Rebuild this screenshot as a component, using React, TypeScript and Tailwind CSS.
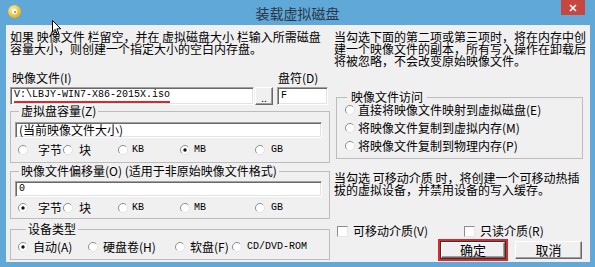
import React from "react";

const cjk = "font-['Noto_Sans_CJK_SC','Liberation_Sans',sans-serif]";
const mono = "font-['Liberation_Mono',monospace]";

function RadioDot({ checked }: { checked?: boolean }) {
  return (
    <svg width="10" height="10" viewBox="0 0 10 10" className="shrink-0">
      <circle cx="5" cy="5" r="4.5" fill="#fff" />
      <path d="M1.8 8.2 A4.5 4.5 0 0 1 8.2 1.8" stroke="#8c8c8c" strokeWidth="1" fill="none" />
      <path d="M8.2 1.8 A4.5 4.5 0 0 1 1.8 8.2" stroke="#e2e2e2" strokeWidth="1" fill="none" />
      {checked && <circle cx="5" cy="5" r="1.7" fill="#111" />}
    </svg>
  );
}

function Radio({
  label,
  checked,
  w,
  gap,
  latin,
}: {
  label: string;
  checked?: boolean;
  w?: string;
  gap: string;
  latin?: boolean;
}) {
  return (
    <div className={`flex items-center h-[12px] shrink-0 ${w ?? ""}`}>
      <RadioDot checked={checked} />
      <span className={`${gap} whitespace-nowrap ${latin ? `${mono} text-[10px]` : ""}`}>{label}</span>
    </div>
  );
}

function Checkbox({ label, w }: { label: string; w?: string }) {
  return (
    <div className={`flex items-center h-[12px] ${w ?? ""}`}>
      <div className="w-[11px] h-[11px] bg-white border border-t-[#8c8c8c] border-l-[#8c8c8c] border-b-[#e6e6e6] border-r-[#e6e6e6]" />
      <span className="ml-[5px] whitespace-nowrap">{label}</span>
    </div>
  );
}

const sunken =
  "bg-white border border-t-[#a0a0a0] border-l-[#a0a0a0] border-b-white border-r-white shadow-[inset_1px_1px_0_#696969,inset_-1px_-1px_0_#e3e3e3]";
const raised =
  "bg-[#f0f0f0] border border-t-white border-l-white border-b-[#696969] border-r-[#696969] shadow-[inset_-1px_-1px_0_#a0a0a0]";

function UnitRow({ first }: { first: boolean }) {
  return (
    <div className="flex ml-[3px]">
      <Radio label="字节" checked={first} w="w-[45px]" gap="ml-[10px]" />
      <Radio label="块" w="w-[55px]" gap="ml-[6px]" />
      <Radio label="KB" latin w="w-[62px]" gap="ml-[4px]" />
      <Radio label="MB" latin checked={!first} w="w-[75px]" gap="ml-[4px]" />
      <Radio label="GB" latin gap="ml-[6px]" />
    </div>
  );
}

export default function App() {
  return (
    <div className={`relative w-[595px] h-[267px] bg-[#5fa8d8] flex flex-col text-[12px] leading-[12px] text-black ${cjk}`}>
      {/* Title bar */}
      <div className="relative h-[25px] shrink-0 flex items-center justify-center">
        <div className="absolute left-[8px] top-[5px] w-[13px] h-[13px] rounded-full bg-[radial-gradient(circle_at_40%_35%,#fff2a8,#f2c230_55%,#d79a10)] flex items-center justify-center">
          <div className="w-[5px] h-[5px] rounded-full bg-white flex items-center justify-center">
            <div className="w-[2px] h-[2px] rounded-full bg-[#3a8fd0]" />
          </div>
        </div>
        <span className="text-[14px] leading-[14px] text-[#2b3644] mt-[1px]">装载虚拟磁盘</span>
        <div className="absolute top-0 right-[10px] w-[24px] h-[15px] bg-[#c7463f] flex items-center justify-center">
          <svg width="8" height="8" viewBox="0 0 8 8">
            <path d="M1 1 L7 7 M7 1 L1 7" stroke="#fff" strokeWidth="1.6" />
          </svg>
        </div>
      </div>

      {/* Client area */}
      <div className="flex-1 ml-[6px] mr-[5px] mb-[5px] bg-[#f0f0f0] flex">
        {/* Left column */}
        <div className="ml-[4px] w-[320px] flex flex-col">
          <div className="mt-[6px] whitespace-nowrap">
            <div>如果 映像文件 栏留空，并在 虚拟磁盘大小 栏输入所需磁盘</div>
            <div>容量大小，则创建一个指定大小的空白内存盘。</div>
          </div>

          <div className="mt-[17px] flex h-[12px]">
            <span className="ml-[2px] w-[266px]">映像文件(I)</span>
            <span>盘符(D)</span>
          </div>

          <div className="mt-[3px] flex h-[18px]">
            <div className={`w-[244px] flex items-center pl-[3px] ${sunken}`}>
              <span className={`${mono} text-[10px] leading-[12px] border-b-2 border-[#e0262b]`}>
                V:\LBJY-WIN7-X86-2015X.iso
              </span>
            </div>
            <div className={`ml-[1px] w-[18px] flex items-end justify-center pb-[2px] ${raised}`}>
              <span className="text-[10px] leading-[8px]">..</span>
            </div>
            <div className={`ml-[4px] w-[51px] flex items-center pl-[3px] ${sunken}`}>
              <span className={`${mono} text-[10px]`}>F</span>
            </div>
          </div>

          <fieldset className="border border-[#bcbcbc] px-[4px] pb-[6px]">
            <legend className="ml-[4px] px-[2px]">虚拟盘容量(Z)</legend>
            <div className={`mt-[5px] h-[16px] mr-[3px] flex items-center pl-[3px] ${sunken}`}>
              (当前映像文件大小)
            </div>
            <div className="mt-[6px]">
              <UnitRow first={false} />
            </div>
          </fieldset>

          <fieldset className="mt-[2px] border border-[#bcbcbc] px-[4px] pb-[4px]">
            <legend className="ml-[4px] px-[2px]">映像文件偏移量(O) (适用于非原始映像文件格式)</legend>
            <div className={`mt-[4px] h-[16px] mr-[3px] flex items-center pl-[3px] ${sunken}`}>
              <span className={`${mono} text-[10px]`}>0</span>
            </div>
            <div className="mt-[5px]">
              <UnitRow first={true} />
            </div>
          </fieldset>

          <fieldset className="mt-[4px] border border-[#bcbcbc] px-[4px] pb-[6px]">
            <legend className="ml-[11px] px-[2px]">设备类型</legend>
            <div className="mt-[6px] flex ml-[3px]">
              <Radio label="自动(A)" checked w="w-[70px]" gap="ml-[5px]" />
              <Radio label="硬盘卷(H)" w="w-[87px]" gap="ml-[5px]" />
              <Radio label="软盘(F)" w="w-[57px]" gap="ml-[5px]" />
              <Radio label="CD/DVD-ROM" latin gap="ml-[5px]" />
            </div>
          </fieldset>
        </div>

        {/* Right column */}
        <div className="ml-[4px] w-[250px] flex flex-col">
          <div className="mt-[6px] whitespace-nowrap">
            <div>当勾选下面的第二项或第三项时，将在内存中创</div>
            <div>建一个映像文件的副本，所有写入操作在卸载后</div>
            <div>将被忽略，不会改变原始映像文件。</div>
          </div>

          <fieldset className="mt-[24px] ml-[2px] w-[247px] border border-[#bcbcbc] pl-[8px] pb-[6px]">
            <legend className="ml-[2px] px-[4px]">映像文件访问</legend>
            <div className="mt-[1px] flex flex-col gap-[6px]">
              <Radio label="直接将映像文件映射到虚拟磁盘(E)" gap="ml-[3px]" />
              <Radio label="将映像文件复制到虚拟内存(M)" gap="ml-[3px]" />
              <Radio label="将映像文件复制到物理内存(P)" gap="ml-[3px]" />
            </div>
          </fieldset>

          <div className="mt-[13px] whitespace-nowrap">
            <div>当勾选 可移动介质 时，将创建一个可移动热插</div>
            <div>拔的虚拟设备，并禁用设备的写入缓存。</div>
          </div>

          <div className="mt-[29px] ml-[3px] flex">
            <Checkbox label="可移动介质(V)" w="w-[127px]" />
            <Checkbox label="只读介质(R)" />
          </div>

          <div className="mt-[2px] flex items-center">
            <div className="ml-[104px] w-[70px] h-[22px] border-2 border-[#e3262b] flex">
              <div className="flex-1 border border-[#333] flex">
                <div className={`flex-1 flex items-center justify-center text-[13px] ${raised}`}>确定</div>
              </div>
            </div>
            <div className={`ml-[7px] w-[67px] h-[18px] flex items-center justify-center text-[13px] ${raised}`}>
              取消
            </div>
          </div>
        </div>
      </div>

      {/* Mouse pointer */}
      <svg className="absolute left-[52px] top-[20px]" width="10" height="15" viewBox="0 0 10 15">
        <path d="M0.5 0.5 L0.5 12 L3.2 9.4 L5.2 14 L6.8 13.3 L4.9 8.8 L8.7 8.8 Z" fill="#fff" stroke="#000" strokeWidth="1" />
      </svg>
    </div>
  );
}
